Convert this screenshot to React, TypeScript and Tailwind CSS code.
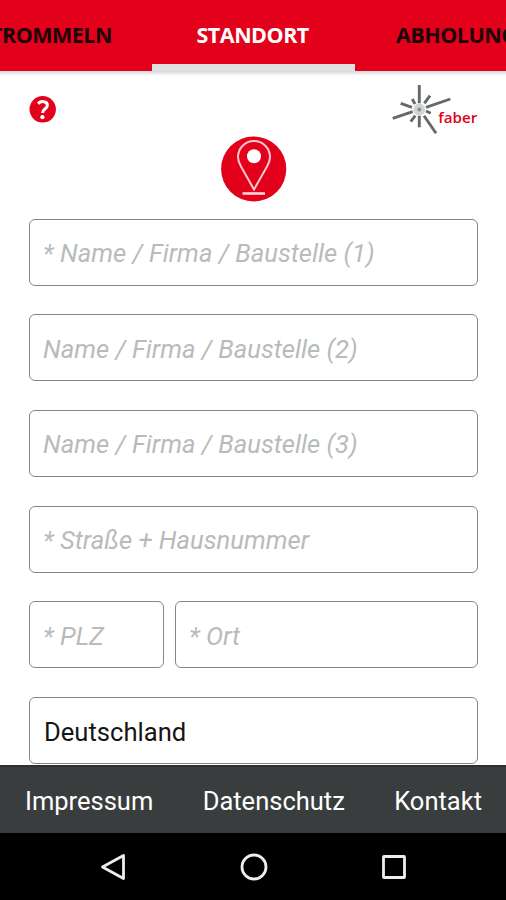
import { useState } from "react";
import clsx from "clsx";

const tabs = [
  { id: "trommeln", label: "TROMMELN", className: "left-[-10px]" },
  { id: "standort", label: "STANDORT", className: "left-[196.5px]" },
  { id: "abholung", label: "ABHOLUNG", className: "left-[396px]" },
];

const footerLinks = ["Impressum", "Datenschutz", "Kontakt"];

// burst of the logo, every ray drawn from the inside to the tip
const rays = [
  "M41.3 27.3 V9",
  "M46.3 27.3 L52 19.7",
  "M48 31.3 L72.3 23",
  "M48 35 L52.7 37.3",
  "M46 39.7 L58 57.3",
  "M41.3 39.7 V51.3",
  "M37.3 39.7 L32.7 45.7",
  "M34.7 35.7 L14.7 42.3",
  "M34 31.3 L22.7 27.3",
  "M37 28 L34.3 23",
];

const Logo = () => (
  <svg width="100" height="60" viewBox="0 0 100 60" className="block">
    <g stroke="#66696a" strokeWidth="2.9">
      {rays.map((d) => (
        <path key={d} d={d} />
      ))}
    </g>
    <circle cx="41.3" cy="33.5" r="6" fill="#d3d5d5" />
    <circle cx="41.3" cy="33.5" r="2" fill="#8b8e8f" />
    <text
      x="60.3"
      y="47.3"
      fill="#e2001a"
      className="text-[15.2px] font-semibold [font-family:'Open_Sans',sans-serif]"
    >
      faber
    </text>
  </svg>
);

const PinIcon = () => (
  <svg width="66" height="66" viewBox="0 0 66 66" className="block">
    <circle cx="32.7" cy="33" r="32.6" fill="#e2001a" />
    <path
      d="M33 53.5 L20 30.5 C18 27.2 17 24.5 17 21 A16 16 0 0 1 49 21 C49 24.5 48 27.2 46 30.5 Z"
      fill="none"
      stroke="#fbc9cd"
      strokeWidth="2"
    />
    <circle cx="33" cy="20.3" r="7" fill="#fff" />
    <path d="M21.5 57.5 H44" stroke="#fbd5d8" strokeWidth="2.6" />
  </svg>
);

const Field = ({
  placeholder,
  value,
  className,
}: {
  placeholder?: string;
  value?: string;
  className?: string;
}) => (
  <input
    type="text"
    placeholder={placeholder}
    defaultValue={value}
    className={clsx(
      "h-[67px] min-w-0 rounded-[6px] border-[1.5px] border-[#858787] bg-white px-[13px] pt-[2px] text-[25.6px] text-[#151515] outline-none placeholder:italic placeholder:text-[#b8bbbb]",
      className
    )}
  />
);

export default function App() {
  const [active, setActive] = useState("standort");

  return (
    <div className="flex h-[900px] w-[506px] flex-col overflow-hidden bg-white [font-family:Roboto,sans-serif]">
      {/* Tabs, the strip is scrolled so both neighbours are cut off */}
      <header className="relative z-10 h-[71px] shrink-0 overflow-hidden bg-[#e2001a]">
        {tabs.map((tab) => (
          <button
            key={tab.id}
            onClick={() => setActive(tab.id)}
            className={clsx(
              "absolute top-[19.5px] text-[21.5px] leading-[30px] font-bold tracking-[-0.5px] [font-family:'Open_Sans',sans-serif]",
              tab.className,
              active === tab.id ? "text-white" : "text-[#1c0506]"
            )}
          >
            {tab.label}
          </button>
        ))}
        <div className="absolute bottom-0 left-[152px] h-[7px] w-[203px] bg-[#dfe1e1]" />
      </header>
      <div className="h-[5px] shrink-0 bg-linear-to-b from-[#d4d8d8] to-white" />

      {/* Form */}
      <main className="flex min-h-0 flex-1 flex-col overflow-hidden pr-[28px] pl-[29px]">
        <div className="flex h-[60px] shrink-0 justify-between">
          <svg width="27" height="27" viewBox="0 0 27 27" className="mt-[20px]">
            <circle cx="13.7" cy="13.3" r="13.2" fill="#e2001a" />
            <path
              d="M9 7.6 C12 4.6 18.4 4.9 18.4 9.3 C18.4 12.9 13.6 12.6 13.6 17"
              fill="none"
              stroke="#fff"
              strokeWidth="3"
            />
            <circle cx="13.4" cy="21.2" r="2.1" fill="#fff" />
          </svg>
          <Logo />
        </div>
        <div className="flex h-[82.6px] shrink-0 justify-center">
          <PinIcon />
        </div>
        <div className="flex flex-col gap-[28.7px]">
          <Field placeholder="* Name / Firma / Baustelle (1)" />
          <Field placeholder="Name / Firma / Baustelle (2)" />
          <Field placeholder="Name / Firma / Baustelle (3)" />
          <Field placeholder="* Straße + Hausnummer" />
          <div className="flex gap-[11px]">
            <Field placeholder="* PLZ" className="w-[135px]" />
            <Field placeholder="* Ort" className="flex-1" />
          </div>
          <Field value="Deutschland" className="pl-[14px]" />
        </div>
      </main>

      {/* Footer */}
      <footer className="flex h-[68px] shrink-0 items-center justify-between border-t-2 border-[#2d3131] bg-[#393d3d] pt-[3px] pr-[24px] pl-[25px] text-[25.5px] text-white">
        {footerLinks.map((link) => (
          <a key={link} href="#">
            {link}
          </a>
        ))}
      </footer>

      {/* Android navigation bar */}
      <nav className="flex h-[67px] shrink-0 items-center justify-center gap-[112px] bg-black pl-[1px]">
        <svg width="28" height="28" viewBox="0 0 28 28" fill="none">
          <path
            d="M23.5 2.5 V25.5 L2.5 14 Z"
            stroke="#eee"
            strokeWidth="2.8"
            strokeLinejoin="round"
          />
        </svg>
        <svg width="28" height="28" viewBox="0 0 28 28" fill="none">
          <circle cx="14" cy="14" r="12" stroke="#eee" strokeWidth="2.8" />
        </svg>
        <svg width="28" height="28" viewBox="0 0 28 28" fill="none">
          <rect
            x="3.5"
            y="3.5"
            width="21"
            height="21"
            rx="0.5"
            stroke="#eee"
            strokeWidth="2.8"
          />
        </svg>
      </nav>
    </div>
  );
}
